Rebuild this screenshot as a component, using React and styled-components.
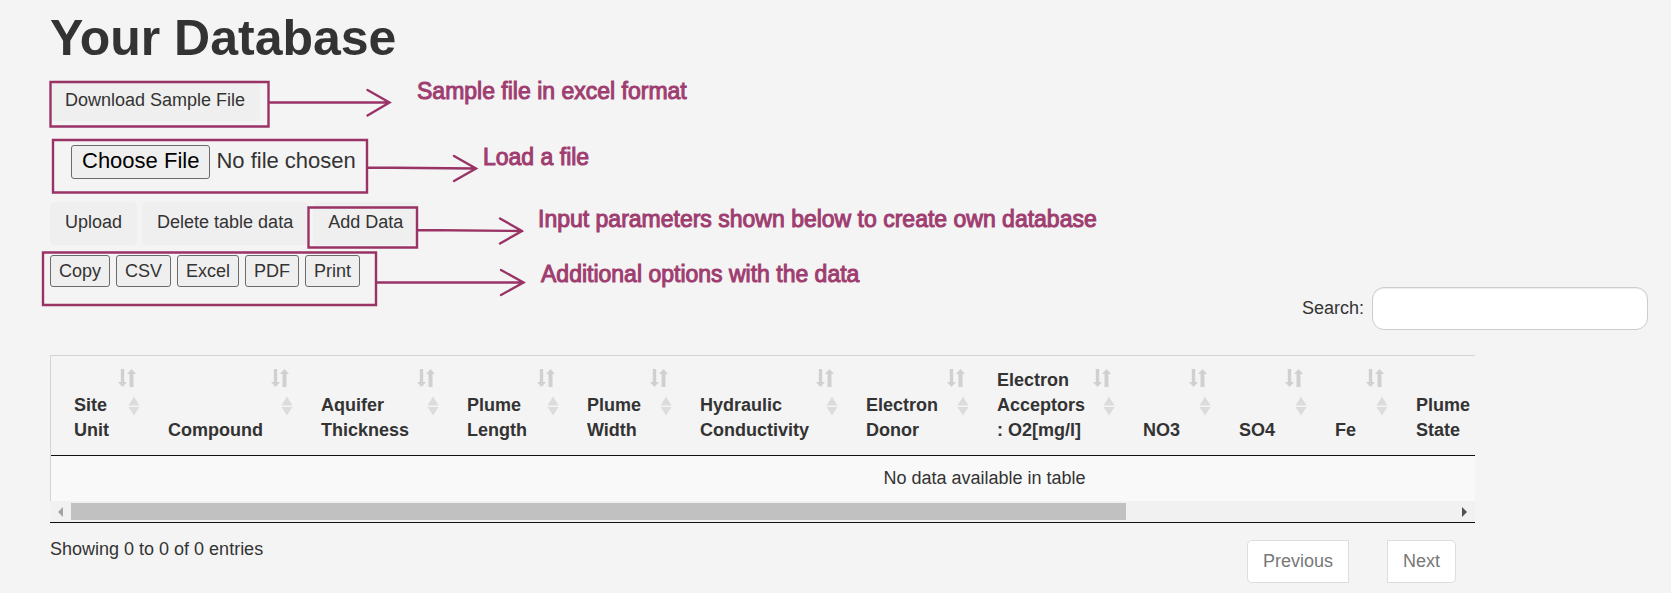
import React from "react";
import styled, { createGlobalStyle } from "styled-components";

const GlobalStyle = createGlobalStyle`
  *, *::before, *::after { box-sizing: border-box; }
  body {
    margin: 0;
    background: #f4f4f4;
    color: #333;
    font-family: "Liberation Sans", Arial, sans-serif;
    font-size: 18px;
    line-height: 25px;
  }
  button, input { font: inherit; color: inherit; margin: 0; }
`;

const Page = styled.main`
  position: relative;
  padding: 10px 23px 0 50px;
`;

const Title = styled.h1`
  margin: 0 0 14px;
  font-size: 50px;
  line-height: 56px;
  font-weight: 700;
`;

const ButtonRow = styled.div`
  display: flex;
  gap: 5px;
`;

const FlatButton = styled.button`
  height: ${(p) => (p.$compact ? 41 : 43)}px;
  padding: 0 15px ${(p) => (p.$compact ? 0 : 2)}px;
  border: 0;
  border-radius: 5px;
  background: #efefef;
`;

const FileInput = styled.input`
  display: block;
  height: 34px;
  margin: 24px 0 23px 21px;
  font-size: 22px;
  line-height: 26px;

  &::file-selector-button {
    height: 34px;
    margin: 0 6px 0 0;
    padding: 0 10px 2px;
    border: 1px solid #6b6b6b;
    border-radius: 3px;
    background: #efefef;
    color: #000;
    font: inherit;
  }
`;

const ExportRow = styled.div`
  display: flex;
  gap: 6px;
  margin-top: 10px;
`;

const ExportButton = styled.button`
  height: 32px;
  padding: 0 8px;
  border: 1px solid #6b6b6b;
  border-radius: 3px;
  background: #efefef;
`;

const SearchRow = styled.div`
  display: flex;
  justify-content: flex-end;
  align-items: center;
  gap: 8px;
`;

const SearchInput = styled.input`
  width: 276px;
  height: 43px;
  padding: 6px 12px;
  border: 1px solid #ccc;
  border-radius: 12px;
  background: #fff;
  box-shadow: inset 0 1px 1px rgba(0, 0, 0, 0.075);
`;

const TableBlock = styled.section`
  margin: 25px 173px 0 0;
`;

const TableFrame = styled.div`
  border-bottom: 1px solid #111;
`;

const TableViewport = styled.div`
  overflow: hidden;
  border: solid #d3d3d3;
  border-width: 1px 0 0 1px;
`;

const DataTable = styled.table`
  width: 1867px;
  table-layout: fixed;
  border-collapse: separate;
  border-spacing: 0;
`;

const HeaderCell = styled.th`
  width: ${(p) => (p.$width ? `${p.$width}px` : "auto")};
  padding: 12px 5px 12px 23px;
  border-bottom: 1px solid #111;
  text-align: left;
`;

const HeaderContent = styled.div`
  display: flex;
  justify-content: space-between;
  height: 75px;
`;

const HeaderLabel = styled.span`
  align-self: flex-end;
  white-space: pre;
`;

const SortIcon = styled.svg`
  flex: none;
  width: 22px;
  height: 48px;
  margin-left: -12px;
`;

const EmptyCell = styled.td`
  height: 45px;
  padding: 0;
  background: #f9f9f9;
  text-align: center;
`;

const ScrollTrack = styled.div`
  display: flex;
  align-items: center;
  height: 21px;
  background: #f1f1f1;
`;

const ScrollArrow = styled.button`
  display: flex;
  align-items: center;
  justify-content: center;
  width: 21px;
  height: 21px;
  padding: 0;
  border: 0;
  background: none;
  color: ${(p) => (p.disabled ? "#a3a3a3" : "#505050")};
`;

const ScrollRail = styled.div`
  flex: 1;
`;

const ScrollThumb = styled.div`
  width: 76.3%;
  height: 17px;
  background: #c1c1c1;
`;

const TableFooter = styled.footer`
  display: flex;
  justify-content: space-between;
  align-items: flex-start;
  padding: 14px 19px 0 0;
`;

const Pager = styled.nav`
  display: flex;
  gap: 38px;
  padding-top: 3px;
`;

const PageButton = styled.button`
  height: 43px;
  padding: 0 15px 1px;
  border: 1px solid #ddd;
  border-radius: ${(p) => (p.$end ? "0 5px 5px 0" : "5px 0 0 5px")};
  background: #fff;
  color: #777;
`;

const NoteDrawing = styled.svg`
  position: absolute;
  top: 0;
  left: 0;
  width: 540px;
  height: 320px;
  pointer-events: none;
  fill: none;
  stroke: #993366;
  stroke-width: 2.4;
  stroke-linecap: round;
`;

const Note = styled.p`
  position: absolute;
  left: ${(p) => p.$left}px;
  top: ${(p) => p.$top}px;
  margin: 0;
  font-size: 23px;
  line-height: 26px;
  white-space: nowrap;
  color: #9f3d70;
  -webkit-text-stroke: 1px #9f3d70;
`;

const columns = [
  { label: "Site\nUnit", width: 94 },
  { label: "Compound", width: 153 },
  { label: "Aquifer\nThickness", width: 146 },
  { label: "Plume\nLength", width: 120 },
  { label: "Plume\nWidth", width: 113 },
  { label: "Hydraulic\nConductivity", width: 166 },
  { label: "Electron\nDonor", width: 131 },
  { label: "Electron\nAcceptors\n: O2[mg/l]", width: 146 },
  { label: "NO3", width: 96 },
  { label: "SO4", width: 96 },
  { label: "Fe", width: 81 },
  { label: "Plume\nState" },
];

const notes = [
  { text: "Sample file in excel format", left: 417, top: 78 },
  { text: "Load a file", left: 483, top: 144 },
  { text: "Input parameters shown below to create own database", left: 538, top: 206 },
  { text: "Additional options with the data", left: 541, top: 261 },
];

function SortMark() {
  return (
    <SortIcon viewBox="0 0 22 48" aria-hidden="true">
      <path
        fill="#d0d0d0"
        d="M2.800 1h3.400v13h2.800l-4.500 5-4.500-5h2.800zM11.500 19V6H9l4.500-5L18 6h-2.500v13z"
      />
      <path fill="#dcdcdc" d="M10.500 37.500l5.500-9 5.500 9zM10.500 39h11l-5.500 8.500z" />
    </SortIcon>
  );
}

function Notes() {
  return (
    <>
      <NoteDrawing viewBox="0 0 540 320" aria-hidden="true">
        <path d="M50.500 82h218v44.500h-218zM269 102.500h120M367.500 90l22 12.500-22 13" />
        <path d="M53 140h314v52.500H53zM367 167.500l108 1M454 156l22 12.500-22 12.500" />
        <path d="M308.500 207.500h108.500v40h-108.500zM418 230l104 1M500 218.500l22 12.500-22 12.500" />
        <path d="M43 252.500h333v52.500H43zM377 282.500h146M501 270l22.500 12.500-22.500 12.500" />
      </NoteDrawing>
      {notes.map((n) => (
        <Note key={n.text} $left={n.left} $top={n.top}>
          {n.text}
        </Note>
      ))}
    </>
  );
}

export default function App() {
  return (
    <>
      <GlobalStyle />
      <Page>
        <Title>Your Database</Title>
        <ButtonRow>
          <FlatButton type="button" $compact>
            Download Sample File
          </FlatButton>
        </ButtonRow>
        <FileInput type="file" aria-label="Database file" />
        <ButtonRow>
          <FlatButton type="button">Upload</FlatButton>
          <FlatButton type="button">Delete table data</FlatButton>
          <FlatButton type="button">Add Data</FlatButton>
        </ButtonRow>
        <ExportRow>
          {["Copy", "CSV", "Excel", "PDF", "Print"].map((name) => (
            <ExportButton key={name} type="button">
              {name}
            </ExportButton>
          ))}
        </ExportRow>
        <SearchRow>
          <label htmlFor="search">Search:</label>
          <SearchInput id="search" type="search" />
        </SearchRow>

        <TableBlock>
          <TableFrame>
            <TableViewport>
              <DataTable>
                <thead>
                  <tr>
                    {columns.map((c) => (
                      <HeaderCell key={c.label} scope="col" $width={c.width}>
                        <HeaderContent>
                          <HeaderLabel>{c.label}</HeaderLabel>
                          <SortMark />
                        </HeaderContent>
                      </HeaderCell>
                    ))}
                  </tr>
                </thead>
                <tbody>
                  <tr>
                    <EmptyCell colSpan={columns.length}>No data available in table</EmptyCell>
                  </tr>
                </tbody>
              </DataTable>
            </TableViewport>
            <ScrollTrack>
              <ScrollArrow type="button" disabled aria-label="Scroll left">
                <svg width="5" height="10" viewBox="0 0 5 10">
                  <path fill="currentColor" d="M5 0v10L0 5z" />
                </svg>
              </ScrollArrow>
              <ScrollRail>
                <ScrollThumb />
              </ScrollRail>
              <ScrollArrow type="button" aria-label="Scroll right">
                <svg width="5" height="10" viewBox="0 0 5 10">
                  <path fill="currentColor" d="M0 0v10l5-5z" />
                </svg>
              </ScrollArrow>
            </ScrollTrack>
          </TableFrame>
          <TableFooter>
            <span>Showing 0 to 0 of 0 entries</span>
            <Pager aria-label="Table pages">
              <PageButton type="button">Previous</PageButton>
              <PageButton type="button" $end>
                Next
              </PageButton>
            </Pager>
          </TableFooter>
        </TableBlock>
        <Notes />
      </Page>
    </>
  );
}
